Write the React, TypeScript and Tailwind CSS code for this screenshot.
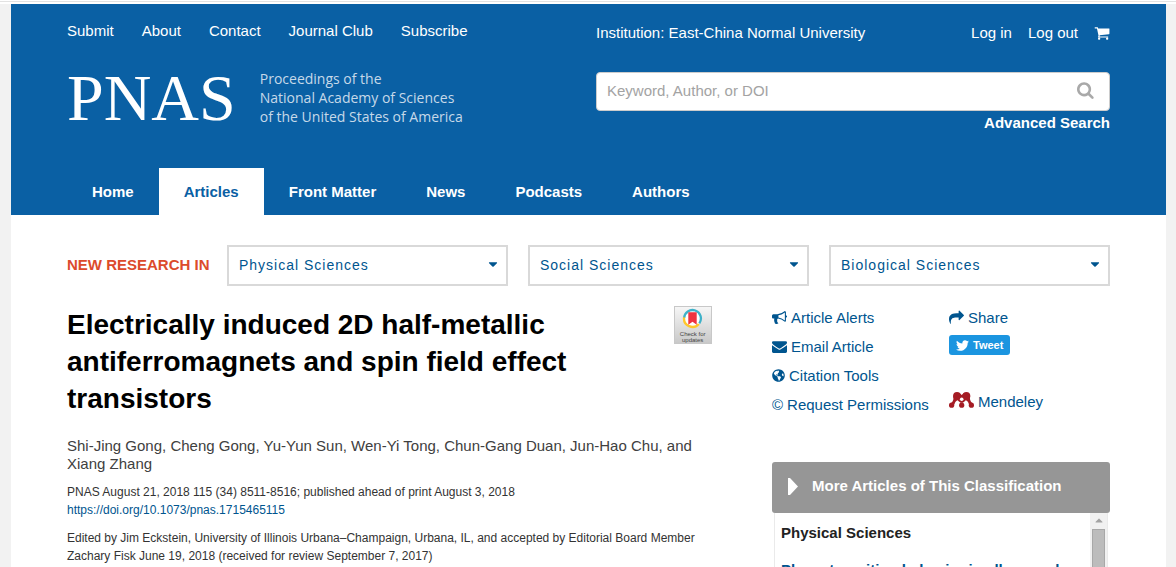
import type { ReactNode } from 'react'
import { FaCaretDown, FaGlobeAmericas, FaTwitter } from 'react-icons/fa'

const topLinks = ['Submit', 'About', 'Contact', 'Journal Club', 'Subscribe']
const tabs = ['Home', 'Articles', 'Front Matter', 'News', 'Podcasts', 'Authors']
const subjects = ['Physical Sciences', 'Social Sciences', 'Biological Sciences']

// Font Awesome 4 glyphs, all on a 1792 grid
const glyphs = {
  cart: 'M704 1536q0 52-38 90t-90 38-90-38-38-90 38-90 90-38 90 38 38 90zm896 0q0 52-38 90t-90 38-90-38-38-90 38-90 90-38 90 38 38 90zm128-1088v512q0 24-16.500 42.500t-40.500 21.500l-1044 122q13 60 13 70 0 16-24 64h920q26 0 45 19t19 45-19 45-45 19h-1024q-26 0-45-19t-19-45q0-11 8-31.500t16-36 21.500-40 15.500-29.500l-177-823h-204q-26 0-45-19t-19-45 19-45 45-19h256q16 0 28.500 6.500t19.500 15.500 13 24.500 8 26 5.500 29.500 4.500 26h1201q26 0 45 19t19 45z',
  search:
    'M1152 832q0-185-131.500-316.500t-316.500-131.500-316.500 131.500-131.500 316.500 131.500 316.500 316.500 131.500 316.500-131.500 131.500-316.500zm512 832q0 52-38 90t-90 38q-54 0-90-38l-343-342q-179 124-399 124-143 0-273.500-55.500t-225-150-150-225-55.500-273.500 55.500-273.500 150-225 225-150 273.500-55.500 273.500 55.500 225 150 150 225 55.500 273.500q0 220-124 399l343 343q37 37 37 90z',
  bullhorn:
    'M1664 640q53 0 90.500 37.500t37.500 90.500-37.500 90.500-90.500 37.500v384q0 52-38 90t-90 38q-417-347-812-380-58 19-91 66t-31 100.500 40 92.500q-20 33-23 65.500t6 58 33.500 55 48 50 61.500 50.500q-29 58-111.500 83t-168.500 11.500-132-55.500q-7-23-29.500-87.500t-32-94.500-23-89-15-101 3.500-98.500 22-110.500h-122q-66 0-113-47t-47-113v-192q0-66 47-113t113-47h480q435 0 896-384 52 0 90 38t38 90v384zm-128 604v-954q-394 302-768 343v270q377 42 768 341z',
  envelope:
    'M1792 710v794q0 66-47 113t-113 47h-1472q-66 0-113-47t-47-113v-794q44 49 101 87 362 246 497 345 57 42 92.500 65.500t94.500 48 110 24.500h2q51 0 110-24.500t94.500-48 92.500-65.500q170-123 498-345 57-39 100-87zm0-294q0 79-49 151t-122 123q-376 261-468 325-10 7-42.500 31t-54 38.500-52 32.500-57.500 27-50 9h-2q-23 0-50-9t-57.500-27-52-32.500-54-38.500-42.500-31q-91-64-262-182.500t-205-142.500q-62-42-117-115.500t-55-136.500q0-78 41.500-130t118.500-52h1472q65 0 112.500 47t47.500 113z',
  share:
    'M1792 640q0 26-19 45l-512 512q-19 19-45 19t-45-19-19-45v-256h-224q-98 0-175.500 6t-154 21.500-133 42.500-105.500 69.500-80 101-48.500 138.500-17.500 181q0 55 5 123 0 6 2.500 23.500t2.500 26.500q0 15-8.500 25t-23.500 10q-16 0-28-17-7-9-13-22t-13.500-30-10.500-24q-127-285-127-451 0-199 53-333 162-403 875-403h224v-256q0-26 19-45t45-19 45 19l512 512q19 19 19 45z',
}

function Icon({ name, className }: { name: keyof typeof glyphs; className: string }) {
  return (
    <svg viewBox="0 0 1792 1792" fill="currentColor" className={className} aria-hidden="true">
      <path d={glyphs[name]} />
    </svg>
  )
}

function Header() {
  return (
    <header className="bg-[#0a60a4] px-14 text-[15px] text-white">
      <div className="grid grid-cols-2 gap-[15px] pt-4">
        <div>
          <nav className="flex gap-7 leading-[22px]">
            {topLinks.map((label) => (
              <a key={label} href="#">{label}</a>
            ))}
          </nav>
          <a href="#" className="mt-[27px] flex items-center gap-6">
            <span className="font-['Liberation_Serif',serif] text-[66px] leading-[57px]">PNAS</span>
            <span className="font-['Open_Sans',sans-serif] text-sm leading-[19px] whitespace-nowrap text-[#c6d9e9]">
              Proceedings of the
              <br />
              National Academy of Sciences
              <br />
              of the United States of America
            </span>
          </a>
        </div>
        <div>
          <div className="flex items-center pt-0.5 leading-[22px]">
            <span className="flex-1">Institution: East-China Normal University</span>
            <nav className="flex items-center gap-4">
              <a href="#">Log in</a>
              <a href="#">Log out</a>
              <a href="#" aria-label="Cart"><Icon name="cart" className="size-4" /></a>
            </nav>
          </div>
          <form className="mt-7 flex h-[39px] items-center rounded border border-[#ccc] bg-white">
            <input
              type="text"
              aria-label="Search"
              placeholder="Keyword, Author, or DOI"
              className="min-w-0 flex-1 px-2.5 text-[#333] outline-none placeholder:text-[#a3a3a3]"
            />
            <button type="button" aria-label="Search" className="px-3.5 pb-1 text-[#a9a9a9]">
              <Icon name="search" className="size-[18px]" />
            </button>
          </form>
          <div className="text-right leading-6">
            <a href="#" className="font-bold">Advanced Search</a>
          </div>
        </div>
      </div>
      <nav className="mt-[33px] flex leading-[47px] font-bold">
        {tabs.map((label) => (
          <a
            key={label}
            href="#"
            className={label === 'Articles' ? 'bg-white px-[25px] text-[#0a60a4]' : 'px-[25px]'}
          >
            {label}
          </a>
        ))}
      </nav>
    </header>
  )
}

function SubjectBar() {
  return (
    <div className="flex items-center">
      <div className="w-40 shrink-0 text-[15px] font-bold text-[#dc4b2c]">NEW RESEARCH IN</div>
      <div className="grid flex-1 grid-cols-3 gap-5">
        {subjects.map((subject) => (
          <div key={subject} className="relative">
            <select
              aria-label={subject}
              className="h-[41px] w-full appearance-none border-2 border-[#d9d9d9] bg-white px-2.5 pb-0.5 text-sm tracking-[1px] text-[#00558f]"
            >
              <option>{subject}</option>
            </select>
            <FaCaretDown className="pointer-events-none absolute top-3 right-2 size-3.5 text-[#00558f]" />
          </div>
        ))}
      </div>
    </div>
  )
}

function CheckUpdates() {
  return (
    <button
      type="button"
      className="flex size-[38px] shrink-0 flex-col items-center border border-[#c8c8c8] bg-linear-to-b from-[#f6f6f6] to-[#c9c9c9] pt-px text-[6px] leading-[6px] text-[#444]"
    >
      <svg viewBox="0 0 20 20" className="size-[21px] shrink-0" fill="none">
        <circle cx="10" cy="10" r="8" fill="#fff" />
        <path d="M2 9.500A8 8 0 1 1 16.500 14.600" stroke="#3eb1c8" strokeWidth="2.200" />
        <path d="M2 9A8 8 0 0 0 16 15.200" stroke="#ffc72c" strokeWidth="2.200" />
        <path d="M6 4h8v12l-4-3-4 3z" fill="#ef3340" />
      </svg>
      <span className="mt-0.5">Check for</span>
      <span>updates</span>
    </button>
  )
}

function Article() {
  return (
    <article className="w-[62%] pt-[3px] pr-0.5 text-xs leading-[18px] text-[#333]">
      <div className="flex items-start justify-between">
        <h1 className="max-w-[540px] text-[28px] leading-[37px] font-bold text-black">
          Electrically induced 2D half-metallic antiferromagnets and spin field effect transistors
        </h1>
        <CheckUpdates />
      </div>
      <p className="mt-5 text-[15px] text-[#404040]">
        Shi-Jing Gong, Cheng Gong, Yu-Yun Sun, Wen-Yi Tong, Chun-Gang Duan, Jun-Hao Chu, and Xiang Zhang
      </p>
      <p className="mt-2.5">
        PNAS August 21, 2018 115 (34) 8511-8516; published ahead of print August 3, 2018
        <br />
        <a href="#" className="text-[#00558f]">https://doi.org/10.1073/pnas.1715465115</a>
      </p>
      <p className="mt-2.5">
        Edited by Jim Eckstein, University of Illinois Urbana–Champaign, Urbana, IL, and accepted by Editorial Board Member
        Zachary Fisk June 19, 2018 (received for review September 7, 2017)
      </p>
    </article>
  )
}

function ToolLink({ icon, children }: { icon: ReactNode; children: ReactNode }) {
  return (
    <a href="#" className="flex items-center gap-1 whitespace-nowrap">
      {icon}
      <span>{children}</span>
    </a>
  )
}

function MendeleyIcon() {
  return (
    <svg viewBox="0 0 25 16" className="mb-1 h-4 w-[25px]" fill="#a51c24">
      <circle cx="2.600" cy="13.200" r="2.600" />
      <circle cx="12.700" cy="13.200" r="2.600" />
      <circle cx="22.400" cy="13.200" r="2.600" />
      <circle cx="8" cy="4" r="3.900" />
      <circle cx="17.400" cy="4" r="3.900" />
      <path d="M4.200 3.800C5 7 4.200 9 2.400 11l3 1.400C6 10 7.400 8.600 8.600 8.200c1.400 1.400 2.500 2.600 4.100 2.600s2.700-1.200 4.100-2.600c1.200.4 2.600 1.800 3.200 4.200l3-1.400c-1.800-2-2.600-4-1.800-7.200L15 1l-2.300 2L10.400 1z" />
      <circle cx="12.700" cy="7.200" r="1.800" fill="#fff" />
    </svg>
  )
}

function Sidebar() {
  return (
    <aside className="w-[338px] text-[15px]">
      <div className="flex text-[#00558f]">
        <div className="flex w-[177px] flex-col leading-[29px]">
          <ToolLink icon={<Icon name="bullhorn" className="size-[15px]" />}>Article Alerts</ToolLink>
          <ToolLink icon={<Icon name="envelope" className="size-[15px]" />}>Email Article</ToolLink>
          <ToolLink icon={<FaGlobeAmericas className="size-[13px]" />}>Citation Tools</ToolLink>
          <ToolLink icon={<span>©</span>}>Request Permissions</ToolLink>
        </div>
        <div className="flex flex-col items-start leading-[29px]">
          <ToolLink icon={<Icon name="share" className="size-[15px]" />}>Share</ToolLink>
          <button
            type="button"
            className="mt-[3px] flex h-5 items-center gap-1 rounded-[3px] bg-[#1b95e0] px-[7px] text-[11px] font-bold text-white"
          >
            <FaTwitter className="size-[13px]" />
            Tweet
          </button>
          <div className="mt-8">
            <ToolLink icon={<MendeleyIcon />}>Mendeley</ToolLink>
          </div>
        </div>
      </div>
      <section className="mt-[43px]">
        <h2 className="flex h-[51px] items-center rounded-[3px] bg-[#969696] px-4 pb-0.5 font-bold text-white">
          <svg viewBox="0 0 10 17" className="mr-3.5 h-[17px] w-2.5" fill="currentColor">
            <path d="M0 0l2 0 8 8.500-8 8.500H0z" />
          </svg>
          More Articles of This Classification
        </h2>
        <div className="mx-0.5 flex h-60 overflow-hidden border border-t-0 border-[#eaeaea]">
          <div className="flex-1 px-1.5 pt-[9px] font-bold">
            <h3 className="text-[#222]">Physical Sciences</h3>
            <a href="#" className="mt-3.5 block text-[#00558f]">Phase transition behavior in alloys and</a>
          </div>
          <div className="flex w-[17px] flex-col items-center bg-[#f1f1f1]">
            <FaCaretDown className="my-0.5 size-3 rotate-180 text-[#a3a3a3]" />
            <div className="h-40 w-[13px] border border-[#a8a8a8] bg-[#bcbcbc]" />
          </div>
        </div>
      </section>
    </aside>
  )
}

export default function App() {
  return (
    <div className="h-screen overflow-hidden bg-[#f2f2f2] font-['Liberation_Sans',Arial,sans-serif]">
      <div className="h-1 bg-white pt-px">
        <div className="h-px bg-[#e2e2e2]" />
      </div>
      <div className="mr-2.5 ml-[11px] min-h-full bg-white">
        <Header />
        <main className="px-14 pt-[30px]">
          <SubjectBar />
          <div className="mt-[17px] flex items-start justify-between">
            <Article />
            <Sidebar />
          </div>
        </main>
      </div>
    </div>
  )
}
